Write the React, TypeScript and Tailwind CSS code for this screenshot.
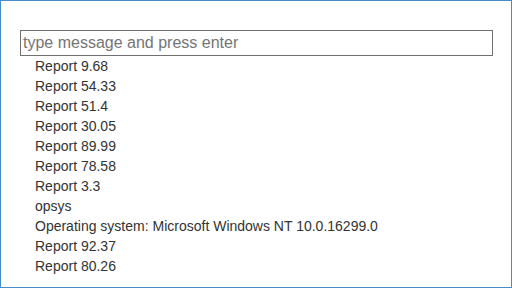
export default function App() {
  const items = [
    "Report 9.68",
    "Report 54.33",
    "Report 51.4",
    "Report 30.05",
    "Report 89.99",
    "Report 78.58",
    "Report 3.3",
    "opsys",
    "Operating system: Microsoft Windows NT 10.0.16299.0",
    "Report 92.37",
    "Report 80.26",
  ];
  return (
    <div
      className="w-[512px] h-[288px] border border-[#4a8ac9] bg-white"
      style={{ fontFamily: '"Liberation Sans", Arial, sans-serif' }}
    >
      <div className="pt-[29px] pl-[19px]">
        <input
          className="w-[473px] h-[26px] border border-[#707070] px-[2px] text-[16px] text-[#333] placeholder:text-[#757575] outline-none"
          placeholder="type message and press enter"
        />
        <ul className="pl-[15px] text-[14px] leading-[20px] text-[#333]">
          {items.map((t, i) => (
            <li key={i}>{t}</li>
          ))}
        </ul>
      </div>
    </div>
  );
}
